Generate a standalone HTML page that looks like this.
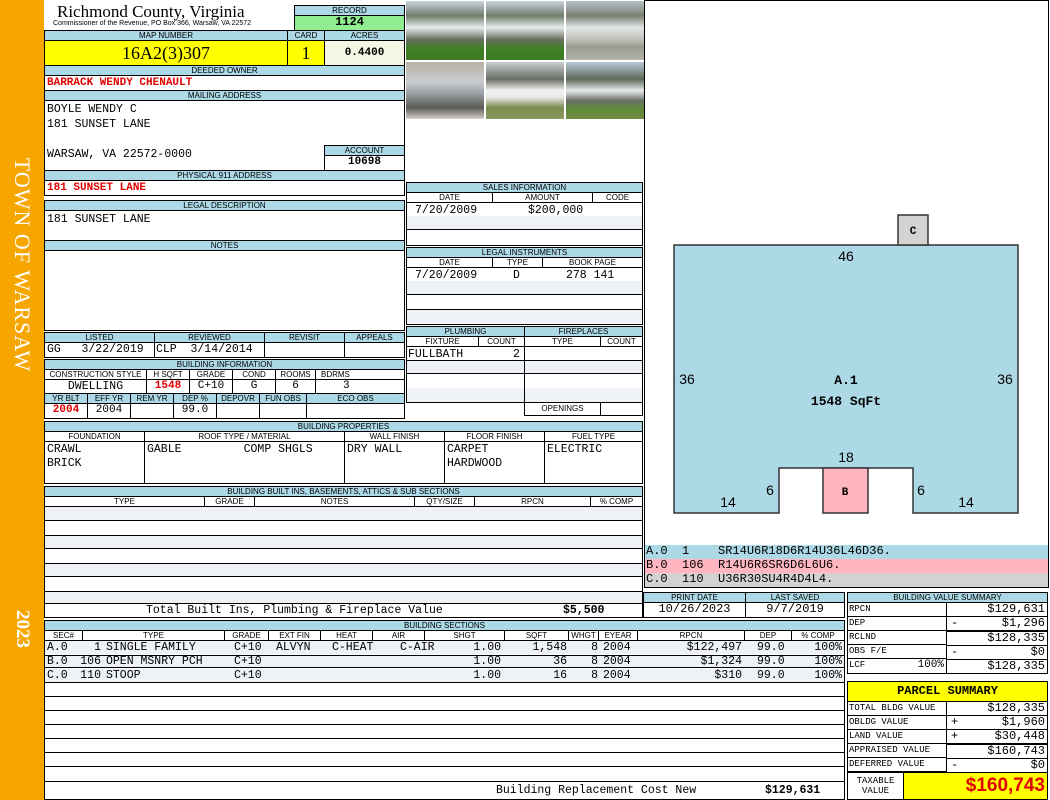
<!DOCTYPE html>
<html><head><meta charset="utf-8"><style>
*{margin:0;padding:0;box-sizing:border-box}
body{width:1050px;height:800px;background:#fff;position:relative;overflow:hidden;font-family:"Liberation Mono",monospace;font-size:11px;color:#000}
div{position:absolute}
.h{background:#add8e6;border:1px solid #000;font:8px/9px "Liberation Sans",sans-serif;text-align:center;white-space:nowrap}
.c{border:1px solid #000;background:#fff;white-space:nowrap;line-height:13px}
.t{white-space:nowrap;line-height:13px}
.r{color:#e00000;font-weight:bold}
.s{background:#eef2f6}
.q{white-space:nowrap;line-height:13px;font-size:11.5px}
.qr{white-space:nowrap;line-height:13px;font-size:11.5px;text-align:right}
</style></head><body>
<!-- orange strip -->
<div style="left:0;top:0;width:44px;height:800px;background:#f7a600"></div>
<div style="left:22px;top:265px;width:0;height:0"><div style="left:-140px;top:-13px;width:280px;height:26px;transform:rotate(90deg);color:#fff;font:22px/26px 'Liberation Serif',serif;text-align:center;letter-spacing:1px">TOWN OF WARSAW</div></div>
<div style="left:22px;top:629px;width:0;height:0"><div style="left:-40px;top:-12px;width:80px;height:24px;transform:rotate(90deg);color:#fff;font:bold 19px/24px 'Liberation Serif',serif;text-align:center">2023</div></div>

<!-- header -->
<div style="left:57px;top:2px;font:17px/20px 'Liberation Serif',serif">Richmond County, Virginia</div>
<div style="left:53px;top:19px;font:7px/9px 'Liberation Sans',sans-serif">Commissioner of the Revenue, PO Box 366, Warsaw, VA 22572</div>
<div class="h" style="left:294px;top:5px;width:111px;height:11px">RECORD</div>
<div class="c" style="left:294px;top:15px;width:111px;height:16px;background:#90ee90;text-align:center;font-weight:bold;font-size:12px">1124</div>
<div class="h" style="left:44px;top:30px;width:244px;height:11px">MAP NUMBER</div>
<div class="h" style="left:287px;top:30px;width:38px;height:11px">CARD</div>
<div class="h" style="left:324px;top:30px;width:81px;height:11px">ACRES</div>
<div class="c" style="left:44px;top:40px;width:244px;height:26px;background:#ffff00;text-align:center;font:18px/24px 'Liberation Serif',serif">16A2(3)307</div>
<div class="c" style="left:287px;top:40px;width:38px;height:26px;background:#ffff00;text-align:center;font:18px/24px 'Liberation Serif',serif">1</div>
<div class="c" style="left:324px;top:40px;width:81px;height:26px;background:#f5f5e6;text-align:center;font-weight:bold;font-size:11px;line-height:24px">0.4400</div>
<div class="h" style="left:44px;top:65px;width:361px;height:11px">DEEDED OWNER</div>
<div class="c r" style="left:44px;top:75px;width:361px;height:16px;padding-left:2px;line-height:15px">BARRACK WENDY CHENAULT</div>
<div class="h" style="left:44px;top:90px;width:361px;height:11px">MAILING ADDRESS</div>
<div class="c" style="left:44px;top:100px;width:361px;height:71px"></div>
<div class="q" style="left:47px;top:103px">BOYLE WENDY C</div>
<div class="q" style="left:47px;top:118px">181 SUNSET LANE</div>
<div class="q" style="left:47px;top:148px">WARSAW, VA 22572-0000</div>
<div class="h" style="left:324px;top:145px;width:81px;height:11px">ACCOUNT</div>
<div class="c" style="left:324px;top:155px;width:81px;height:16px;text-align:center;font-weight:bold">10698</div>
<div class="h" style="left:44px;top:170px;width:361px;height:11px">PHYSICAL 911 ADDRESS</div>
<div class="c r" style="left:44px;top:180px;width:361px;height:16px;padding-left:2px;line-height:15px">181 SUNSET LANE</div>

<!-- photos -->
<div style="left:405px;top:0;width:240px;height:182px;border-right:1px solid #000"></div>
<div style="left:406px;top:1px;width:78px;height:59px;background:linear-gradient(#c9d3dc 0,#6f7d6a 25%,#e7ebee 45%,#6a7060 65%,#3f7f26 80%,#3d7a22)"></div>
<div style="left:486px;top:1px;width:78px;height:59px;background:linear-gradient(#c9d3dc 0,#6f7d6a 25%,#e7ebee 45%,#6a7060 65%,#3f7f26 80%,#3d7a22)"></div>
<div style="left:566px;top:1px;width:78px;height:59px;background:linear-gradient(#b8c2c8 0,#7a8070 25%,#e3e6e8 45%,#c6c7c2 62%,#9a9a90 78%,#b5b4a8)"></div>
<div style="left:406px;top:62px;width:78px;height:57px;background:linear-gradient(#b7b3a4 0,#c8ccd0 35%,#9aa0a6 55%,#5a5a55 80%,#d8d2ca)"></div>
<div style="left:486px;top:62px;width:78px;height:57px;background:linear-gradient(#c8cdd0 0,#6a6f66 30%,#f2f2f0 50%,#e8e8e6 62%,#7a8c50 80%,#8a9a60)"></div>
<div style="left:566px;top:62px;width:78px;height:57px;background:linear-gradient(#b8c8d6 0,#5c6a58 30%,#e7eaec 50%,#6a7066 68%,#5f8a3a 82%,#6f8a40)"></div>

<!-- legal & notes -->
<div class="h" style="left:44px;top:200px;width:361px;height:11px">LEGAL DESCRIPTION</div>
<div class="c" style="left:44px;top:210px;width:361px;height:31px;padding:2px 2px;font-size:11.5px">181 SUNSET LANE</div>
<div class="h" style="left:44px;top:240px;width:361px;height:11px">NOTES</div>
<div class="c" style="left:44px;top:250px;width:361px;height:81px"></div>

<!-- listed -->
<div class="h" style="left:44px;top:332px;width:111px;height:11px">LISTED</div>
<div class="h" style="left:154px;top:332px;width:111px;height:11px">REVIEWED</div>
<div class="h" style="left:264px;top:332px;width:81px;height:11px">REVISIT</div>
<div class="h" style="left:344px;top:332px;width:61px;height:11px">APPEALS</div>
<div class="c" style="left:44px;top:342px;width:111px;height:16px;padding-left:2px;font-size:11.5px">GG&nbsp;&nbsp;&nbsp;3/22/2019</div>
<div class="c" style="left:154px;top:342px;width:111px;height:16px;padding-left:1px;font-size:11.5px">CLP&nbsp;&nbsp;3/14/2014</div>
<div class="c" style="left:264px;top:342px;width:81px;height:16px"></div>
<div class="c" style="left:344px;top:342px;width:61px;height:16px"></div>

<!-- building info -->
<div class="h" style="left:44px;top:359px;width:361px;height:11px">BUILDING INFORMATION</div>
<div class="h" style="left:44px;top:369px;width:103px;height:11px;background:#fff">CONSTRUCTION STYLE</div>
<div class="h" style="left:146px;top:369px;width:44px;height:11px;background:#fff">H SQFT</div>
<div class="h" style="left:189px;top:369px;width:44px;height:11px;background:#fff">GRADE</div>
<div class="h" style="left:232px;top:369px;width:44px;height:11px;background:#fff">COND</div>
<div class="h" style="left:275px;top:369px;width:41px;height:11px;background:#fff">ROOMS</div>
<div class="h" style="left:315px;top:369px;width:90px;height:11px;background:#fff;text-align:left;padding-left:5px">BDRMS</div>
<div class="c" style="left:44px;top:379px;width:103px;height:15px;text-align:center;font-size:11.5px">DWELLING</div>
<div class="c r" style="left:146px;top:379px;width:44px;height:15px;text-align:center">1548</div>
<div class="c" style="left:189px;top:379px;width:44px;height:15px;text-align:center">C+10</div>
<div class="c" style="left:232px;top:379px;width:44px;height:15px;text-align:center">G</div>
<div class="c" style="left:275px;top:379px;width:41px;height:15px;text-align:center">6</div>
<div class="c" style="left:315px;top:379px;width:90px;height:15px;padding-left:27px">3</div>
<div class="h" style="left:44px;top:393px;width:44px;height:11px">YR BLT</div>
<div class="h" style="left:87px;top:393px;width:44px;height:11px">EFF YR</div>
<div class="h" style="left:130px;top:393px;width:44px;height:11px">REM YR</div>
<div class="h" style="left:173px;top:393px;width:44px;height:11px">DEP %</div>
<div class="h" style="left:216px;top:393px;width:44px;height:11px">DEPOVR</div>
<div class="h" style="left:259px;top:393px;width:48px;height:11px">FUN OBS</div>
<div class="h" style="left:306px;top:393px;width:99px;height:11px">ECO OBS</div>
<div class="c r" style="left:44px;top:403px;width:44px;height:16px;text-align:center">2004</div>
<div class="c" style="left:87px;top:403px;width:44px;height:16px;text-align:center">2004</div>
<div class="c" style="left:130px;top:403px;width:44px;height:16px"></div>
<div class="c" style="left:173px;top:403px;width:44px;height:16px;text-align:center">99.0</div>
<div class="c" style="left:216px;top:403px;width:44px;height:16px"></div>
<div class="c" style="left:259px;top:403px;width:48px;height:16px"></div>
<div class="c" style="left:306px;top:403px;width:99px;height:16px"></div>

<!-- sales -->
<div class="h" style="left:406px;top:182px;width:237px;height:11px">SALES INFORMATION</div>
<div class="h" style="left:406px;top:192px;width:87px;height:11px;background:#fff">DATE</div>
<div class="h" style="left:492px;top:192px;width:101px;height:11px;background:#fff">AMOUNT</div>
<div class="h" style="left:592px;top:192px;width:51px;height:11px;background:#fff">CODE</div>
<div class="c" style="left:406px;top:202px;width:237px;height:44px"></div>
<div class="s" style="left:407px;top:216px;width:235px;height:14px;border-bottom:1px solid #000"></div>
<div class="q" style="left:415px;top:204px">7/20/2009</div>
<div class="q" style="left:528px;top:204px">$200,000</div>

<div class="h" style="left:406px;top:247px;width:237px;height:11px">LEGAL INSTRUMENTS</div>
<div class="h" style="left:406px;top:257px;width:87px;height:11px;background:#fff">DATE</div>
<div class="h" style="left:492px;top:257px;width:51px;height:11px;background:#fff">TYPE</div>
<div class="h" style="left:542px;top:257px;width:101px;height:11px;background:#fff">BOOK PAGE</div>
<div class="c" style="left:406px;top:267px;width:237px;height:58px"></div>
<div class="s" style="left:407px;top:281px;width:235px;height:14px;border-bottom:1px solid #000"></div>
<div class="s" style="left:407px;top:309px;width:235px;height:14px;border-top:1px solid #000"></div>
<div class="q" style="left:415px;top:269px">7/20/2009</div>
<div class="q" style="left:513px;top:269px">D</div>
<div class="q" style="left:566px;top:269px">278 141</div>

<!-- plumbing / fireplaces -->
<div class="h" style="left:406px;top:326px;width:119px;height:11px">PLUMBING</div>
<div class="h" style="left:524px;top:326px;width:119px;height:11px">FIREPLACES</div>
<div class="h" style="left:406px;top:336px;width:73px;height:11px;background:#fff">FIXTURE</div>
<div class="h" style="left:478px;top:336px;width:47px;height:11px;background:#fff">COUNT</div>
<div class="h" style="left:524px;top:336px;width:77px;height:11px;background:#fff">TYPE</div>
<div class="h" style="left:600px;top:336px;width:43px;height:11px;background:#fff">COUNT</div>
<div class="c" style="left:406px;top:346px;width:119px;height:57px"></div>
<div class="c" style="left:524px;top:346px;width:119px;height:57px"></div>
<div style="left:407px;top:360px;width:117px;height:14px;border-bottom:1px solid #000;border-top:1px solid #000" class="s"></div>
<div style="left:407px;top:388px;width:117px;height:14px" class="s"></div>
<div style="left:525px;top:360px;width:117px;height:14px;border-bottom:1px solid #000;border-top:1px solid #000" class="s"></div>
<div style="left:525px;top:388px;width:117px;height:14px" class="s"></div>
<div class="q" style="left:408px;top:348px">FULLBATH</div>
<div class="q" style="left:513px;top:348px">2</div>
<div class="h" style="left:524px;top:402px;width:77px;height:14px;background:#fff;line-height:12px">OPENINGS</div>
<div class="c" style="left:600px;top:402px;width:43px;height:14px"></div>

<!-- building properties -->
<div class="h" style="left:44px;top:421px;width:599px;height:11px">BUILDING PROPERTIES</div>
<div class="h" style="left:44px;top:431px;width:101px;height:11px;background:#fff">FOUNDATION</div>
<div class="h" style="left:144px;top:431px;width:201px;height:11px;background:#fff">ROOF TYPE / MATERIAL</div>
<div class="h" style="left:344px;top:431px;width:101px;height:11px;background:#fff">WALL FINISH</div>
<div class="h" style="left:444px;top:431px;width:101px;height:11px;background:#fff">FLOOR FINISH</div>
<div class="h" style="left:544px;top:431px;width:99px;height:11px;background:#fff">FUEL TYPE</div>
<div class="c" style="left:44px;top:441px;width:101px;height:43px;padding:1px 2px;white-space:pre;font-size:11.5px;line-height:14px">CRAWL
BRICK</div>
<div class="c" style="left:144px;top:441px;width:201px;height:43px;padding:1px 2px;white-space:pre;font-size:11.5px">GABLE         COMP SHGLS</div>
<div class="c" style="left:344px;top:441px;width:101px;height:43px;padding:1px 2px;font-size:11.5px">DRY WALL</div>
<div class="c" style="left:444px;top:441px;width:101px;height:43px;padding:1px 2px;white-space:pre;font-size:11.5px;line-height:14px">CARPET
HARDWOOD</div>
<div class="c" style="left:544px;top:441px;width:99px;height:43px;padding:1px 2px;font-size:11.5px">ELECTRIC</div>

<!-- built ins -->
<div class="h" style="left:44px;top:486px;width:599px;height:11px">BUILDING BUILT INS, BASEMENTS, ATTICS &amp; SUB SECTIONS</div>
<div class="h" style="left:44px;top:496px;width:161px;height:11px;background:#fff">TYPE</div>
<div class="h" style="left:204px;top:496px;width:51px;height:11px;background:#fff">GRADE</div>
<div class="h" style="left:254px;top:496px;width:161px;height:11px;background:#fff">NOTES</div>
<div class="h" style="left:414px;top:496px;width:61px;height:11px;background:#fff">QTY/SIZE</div>
<div class="h" style="left:474px;top:496px;width:117px;height:11px;background:#fff">RPCN</div>
<div class="h" style="left:590px;top:496px;width:53px;height:11px;background:#fff">% COMP</div>
<div class="c" style="left:44px;top:506px;width:599px;height:112px"></div>
<div class="s" style="left:45px;top:507px;width:597px;height:14px;border-bottom:1px solid #000"></div>
<div style="left:45px;top:535px;width:597px;height:14px;border-bottom:1px solid #000;border-top:1px solid #000" class="s"></div>
<div style="left:45px;top:563px;width:597px;height:14px;border-bottom:1px solid #000;border-top:1px solid #000" class="s"></div>
<div style="left:45px;top:591px;width:597px;height:12px;border-top:1px solid #000" class="s"></div>
<div style="left:45px;top:603px;width:597px;height:1px;background:#000"></div>
<div class="t" style="left:146px;top:604px;font-size:11.5px">Total Built Ins, Plumbing &amp; Fireplace Value</div>
<div class="t" style="left:563px;top:604px;font-weight:bold;font-size:11.5px">$5,500</div>

<!-- building sections -->
<div class="h" style="left:44px;top:620px;width:801px;height:11px">BUILDING SECTIONS</div>
<div class="c" style="left:44px;top:630px;width:801px;height:170px"></div>
<div class="h" style="left:44px;top:630px;width:39px;height:11px;background:#fff">SEC#</div>
<div class="h" style="left:82px;top:630px;width:143px;height:11px;background:#fff">TYPE</div>
<div class="h" style="left:224px;top:630px;width:45px;height:11px;background:#fff">GRADE</div>
<div class="h" style="left:268px;top:630px;width:53px;height:11px;background:#fff">EXT FIN</div>
<div class="h" style="left:320px;top:630px;width:53px;height:11px;background:#fff">HEAT</div>
<div class="h" style="left:372px;top:630px;width:53px;height:11px;background:#fff">AIR</div>
<div class="h" style="left:424px;top:630px;width:81px;height:11px;background:#fff">SHGT</div>
<div class="h" style="left:504px;top:630px;width:65px;height:11px;background:#fff">SQFT</div>
<div class="h" style="left:568px;top:630px;width:31px;height:11px;background:#fff">WHGT</div>
<div class="h" style="left:598px;top:630px;width:40px;height:11px;background:#fff">EYEAR</div>
<div class="h" style="left:637px;top:630px;width:108px;height:11px;background:#fff">RPCN</div>
<div class="h" style="left:744px;top:630px;width:48px;height:11px;background:#fff">DEP</div>
<div class="h" style="left:791px;top:630px;width:54px;height:11px;background:#fff">% COMP</div>
<div class="s" style="left:45px;top:641px;width:799px;height:13px"></div>
<div class="s" style="left:45px;top:655px;width:799px;height:13px;border-top:1px solid #000;border-bottom:1px solid #000"></div>
<div class="s" style="left:45px;top:669px;width:799px;height:14px;border-bottom:1px solid #000"></div>
<div style="left:45px;top:696px;width:799px;height:1px;background:#000"></div>
<div style="left:45px;top:710px;width:799px;height:1px;background:#000"></div>
<div style="left:45px;top:724px;width:799px;height:1px;background:#000"></div>
<div style="left:45px;top:738px;width:799px;height:1px;background:#000"></div>
<div style="left:45px;top:752px;width:799px;height:1px;background:#000"></div>
<div style="left:45px;top:766px;width:799px;height:1px;background:#000"></div>
<div style="left:45px;top:781px;width:799px;height:1px;background:#000"></div>

<div class="q" style="left:47px;top:641px">A.0</div>
<div class="qr" style="left:75px;top:641px;width:26px">1</div>
<div class="q" style="left:106px;top:641px">SINGLE FAMILY</div>
<div class="q" style="left:234px;top:641px">C+10</div>
<div class="q" style="left:276px;top:641px">ALVYN</div>
<div class="q" style="left:332px;top:641px">C-HEAT</div>
<div class="q" style="left:400px;top:641px">C-AIR</div>
<div class="qr" style="left:440px;top:641px;width:61px">1.00</div>
<div class="qr" style="left:500px;top:641px;width:67px">1,548</div>
<div class="qr" style="left:570px;top:641px;width:28px">8</div>
<div class="q" style="left:603px;top:641px">2004</div>

<div class="q" style="left:47px;top:655px">B.0</div>
<div class="qr" style="left:75px;top:655px;width:26px">106</div>
<div class="q" style="left:106px;top:655px">OPEN MSNRY PCH</div>
<div class="q" style="left:234px;top:655px">C+10</div>
<div class="qr" style="left:440px;top:655px;width:61px">1.00</div>
<div class="qr" style="left:500px;top:655px;width:67px">36</div>
<div class="qr" style="left:570px;top:655px;width:28px">8</div>
<div class="q" style="left:603px;top:655px">2004</div>

<div class="q" style="left:47px;top:669px">C.0</div>
<div class="qr" style="left:75px;top:669px;width:26px">110</div>
<div class="q" style="left:106px;top:669px">STOOP</div>
<div class="q" style="left:234px;top:669px">C+10</div>
<div class="qr" style="left:440px;top:669px;width:61px">1.00</div>
<div class="qr" style="left:500px;top:669px;width:67px">16</div>
<div class="qr" style="left:570px;top:669px;width:28px">8</div>
<div class="q" style="left:603px;top:669px">2004</div>

<div class="qr" style="left:640px;top:641px;width:102px">$122,497</div>
<div class="qr" style="left:640px;top:655px;width:102px">$1,324</div>
<div class="qr" style="left:640px;top:669px;width:102px">$310</div>
<div class="q" style="left:757px;top:641px">99.0</div>
<div class="q" style="left:757px;top:655px">99.0</div>
<div class="q" style="left:757px;top:669px">99.0</div>
<div class="qr" style="left:800px;top:641px;width:42px">100%</div>
<div class="qr" style="left:800px;top:655px;width:42px">100%</div>
<div class="qr" style="left:800px;top:669px;width:42px">100%</div>
<div class="q" style="left:496px;top:784px">Building Replacement Cost New</div>
<div class="q" style="left:765px;top:784px;font-weight:bold">$129,631</div>

<!-- sketch -->
<div style="left:644px;top:0;width:405px;height:546px;border:1px solid #000"></div>
<svg style="position:absolute;left:0;top:0" width="1050" height="800">
<polygon points="674,245 1018,245 1018,513 913,513 913,468 779,468 779,513 674,513" fill="#add8e6" stroke="#333" stroke-width="1.5"/>
<rect x="823" y="468" width="45" height="45" fill="#ffb6c1" stroke="#333" stroke-width="1.5"/>
<rect x="898" y="215" width="30" height="30" fill="#d3d3d3" stroke="#333" stroke-width="1.5"/>
<g font-family="Liberation Sans,sans-serif" font-size="14" text-anchor="middle" fill="#000">
<text x="846" y="261">46</text><text x="687" y="384">36</text><text x="1005" y="384">36</text>
<text x="846" y="462">18</text><text x="770" y="495">6</text><text x="921" y="495">6</text>
<text x="728" y="507">14</text><text x="966" y="507">14</text></g>
<g font-family="Liberation Mono,monospace" font-size="13" font-weight="bold" text-anchor="middle">
<text x="846" y="384">A.1</text><text x="846" y="405">1548 SqFt</text>
<text x="845" y="495" font-size="11">B</text><text x="913" y="234" font-size="11">C</text></g>
</svg>
<div class="t" style="left:645px;top:545px;width:403px;height:14px;background:#add8e6;font-size:12px;white-space:pre;padding-left:1px">A.0  1    SR14U6R18D6R14U36L46D36.</div>
<div class="t" style="left:645px;top:559px;width:403px;height:14px;background:#ffb6c1;font-size:12px;white-space:pre;padding-left:1px">B.0  106  R14U6R6SR6D6L6U6.</div>
<div class="t" style="left:645px;top:573px;width:403px;height:14px;background:#d3d3d3;font-size:12px;white-space:pre;padding-left:1px">C.0  110  U36R30SU4R4D4L4.</div>
<div style="left:644px;top:545px;width:405px;height:43px;border:1px solid #000;border-top:0"></div>

<!-- print date -->
<div class="h" style="left:643px;top:592px;width:103px;height:11px">PRINT DATE</div>
<div class="h" style="left:745px;top:592px;width:100px;height:11px">LAST SAVED</div>
<div class="c" style="left:643px;top:602px;width:103px;height:16px;text-align:center;font-size:12px">10/26/2023</div>
<div class="c" style="left:745px;top:602px;width:100px;height:16px;text-align:center;font-size:12px">9/7/2019</div>

<!-- building value summary -->
<div class="h" style="left:847px;top:592px;width:201px;height:11px">BUILDING VALUE SUMMARY</div>
<div class="c" style="left:847px;top:602px;width:100px;height:15px;font-size:9px;padding-left:1px">RPCN</div>
<div class="c" style="left:946px;top:602px;width:102px;height:15px;text-align:right;padding-right:2px;font-size:12px">$129,631</div>
<div class="c" style="left:847px;top:616px;width:100px;height:15px;font-size:9px;padding-left:1px">DEP</div>
<div class="c" style="left:946px;top:616px;width:102px;height:16px;text-align:right;padding-right:2px;border-bottom:2px solid #000;font-size:12px"><span style="position:absolute;left:4px">-</span>$1,296</div>
<div class="c" style="left:847px;top:630px;width:100px;height:15px;font-size:9px;padding-left:1px">RCLND</div>
<div class="c" style="left:946px;top:631px;width:102px;height:15px;text-align:right;padding-right:2px;font-size:12px">$128,335</div>
<div class="c" style="left:847px;top:644px;width:100px;height:15px;font-size:9px;padding-left:1px">OBS F/E</div>
<div class="c" style="left:946px;top:645px;width:102px;height:16px;text-align:right;padding-right:2px;border-bottom:2px solid #000;font-size:12px"><span style="position:absolute;left:4px">-</span>$0</div>
<div class="c" style="left:847px;top:658px;width:100px;height:16px;font-size:9px;padding-left:1px">LCF<span style="position:absolute;right:2px;font-size:11px">100%</span></div>
<div class="c" style="left:946px;top:659px;width:102px;height:15px;text-align:right;padding-right:2px;font-size:12px">$128,335</div>

<!-- parcel summary -->
<div class="c" style="left:847px;top:681px;width:201px;height:21px;background:#ffff00;text-align:center;font-weight:bold;font-size:12px;line-height:19px">PARCEL SUMMARY</div>
<div class="c" style="left:847px;top:701px;width:100px;height:15px;font-size:9px;padding-left:1px">TOTAL BLDG VALUE</div>
<div class="c" style="left:946px;top:701px;width:102px;height:15px;text-align:right;padding-right:2px;font-size:12px">$128,335</div>
<div class="c" style="left:847px;top:715px;width:100px;height:15px;font-size:9px;padding-left:1px">OBLDG VALUE</div>
<div class="c" style="left:946px;top:715px;width:102px;height:15px;text-align:right;padding-right:2px;font-size:12px"><span style="position:absolute;left:4px">+</span>$1,960</div>
<div class="c" style="left:847px;top:729px;width:100px;height:15px;font-size:9px;padding-left:1px">LAND VALUE</div>
<div class="c" style="left:946px;top:729px;width:102px;height:16px;text-align:right;padding-right:2px;border-bottom:2px solid #000;font-size:12px"><span style="position:absolute;left:4px">+</span>$30,448</div>
<div class="c" style="left:847px;top:743px;width:100px;height:15px;font-size:9px;padding-left:1px">APPRAISED VALUE</div>
<div class="c" style="left:946px;top:744px;width:102px;height:15px;text-align:right;padding-right:2px;font-size:12px">$160,743</div>
<div class="c" style="left:847px;top:757px;width:100px;height:15px;font-size:9px;padding-left:1px">DEFERRED VALUE</div>
<div class="c" style="left:946px;top:758px;width:102px;height:15px;text-align:right;padding-right:2px;font-size:12px"><span style="position:absolute;left:4px">-</span>$0</div>
<div class="c" style="left:847px;top:772px;width:57px;height:28px;font-size:9px;text-align:center;line-height:10px;padding-top:3px">TAXABLE<br>VALUE</div>
<div class="c" style="left:903px;top:772px;width:145px;height:28px;background:#ffff00;text-align:right;padding-right:2px;color:#e00000;font:bold 19px/26px 'Liberation Sans',sans-serif">$160,743</div>
</body></html>
